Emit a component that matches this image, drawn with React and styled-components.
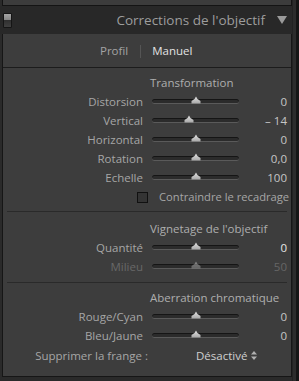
import React from "react";
import styled, { createGlobalStyle } from "styled-components";

const GlobalStyle = createGlobalStyle`
  html, body {
    margin: 0;
    padding: 0;
    background: #1c1c1c;
  }
  body {
    font-family: "Open Sans", "Noto Sans", sans-serif;
    -webkit-font-smoothing: antialiased;
  }
`;

const Screen = styled.div`
  width: 299px;
  height: 381px;
  overflow: hidden;
  background: #2a2a2a;
  display: flex;
`;

const Column = styled.div`
  width: 292px;
  display: flex;
  flex-direction: column;
  padding-left: 2px;
  box-sizing: border-box;
`;

const RightStrip = styled.div`
  width: 3px;
  background: #2c2c2c;
  border-left: 1px solid #222;
  & + div {
    flex: 1;
    background: #151515;
  }
`;

const PrevPanel = styled.div`
  height: 5px;
  background: #3c3c3c;
  border: 1px solid #141414;
  border-top: 0;
`;

const Header = styled.div`
  height: 28px;
  display: flex;
  align-items: center;
  background: #282828;
  margin-left: -2px;
  padding: 0 8px 0 3px;
  margin-right: -3px;
`;

const Toggle = styled.div`
  width: 7px;
  height: 13px;
  border: 1px solid #151515;
  border-radius: 1px;
  background: linear-gradient(#a4a4a4 0, #828282 50%, #303030 50%, #404040 100%);
  margin-top: 1px;
`;

const Title = styled.div`
  flex: 1;
  text-align: right;
  color: #9d9d9d;
  font-size: 13.5px;
  padding-right: 12px;
`;

const Panel = styled.div`
  background: #3d3d3d;
  border: 1px solid #161616;
  border-top: 0;
  height: 343px;
  box-sizing: border-box;
`;

const Tabs = styled.div`
  height: 33px;
  display: flex;
  align-items: center;
  border-bottom: 1px solid #1c1c1c;
  padding-left: 97px;
  font-size: 11.5px;
`;

const Tab = styled.span`
  color: ${(p) => (p.$active ? "#e2e2e2" : "#a3a3a3")};
`;

const TabSep = styled.span`
  width: 1px;
  height: 13px;
  background: #555;
  margin: 2px 11px 0 12px;
`;

const Section = styled.div`
  padding: ${(p) => p.$pad};
  border-bottom: ${(p) => (p.$last ? "0" : "1px solid #2a2a2a")};
  margin: 0 4px;
`;

const Heading = styled.div`
  height: 19px;
  line-height: 19px;
  padding-left: 143px;
  color: #aeaeae;
  font-size: 11.5px;
`;

const Row = styled.div`
  height: 19px;
  display: grid;
  grid-template-columns: 136px 87px 39px;
  column-gap: 9px;
  align-items: center;
  font-size: 11.5px;
  color: ${(p) => (p.$dim ? "#686868" : "#a6a6a6")};
`;

const Label = styled.div`
  text-align: right;
  white-space: nowrap;
`;

const Value = styled.div`
  text-align: right;
  color: ${(p) => (p.$dim ? "#666" : p.$bright ? "#e6e6e6" : "#c6c6c6")};
`;

const Track = styled.div`
  position: relative;
  height: 5px;
  border-radius: 3px;
  background: #2b2b2b;
  border-top: 1px solid #151515;
  border-bottom: 1px solid #5a5a5a;
  box-sizing: border-box;
`;

const Thumb = styled.svg`
  position: absolute;
  top: -4px;
  width: 10px;
  height: 8px;
  margin-left: -5px;
  opacity: ${(p) => (p.$dim ? 0.45 : 1)};
`;

const CheckRow = styled.div`
  height: 19px;
  display: flex;
  align-items: center;
  padding-left: 130px;
  font-size: 11.2px;
  color: #a6a6a6;
  white-space: nowrap;
`;

const Box = styled.span`
  flex: none;
  width: 9px;
  height: 9px;
  border: 1px solid #111;
  background: #343434;
  margin-right: 11px;
  margin-top: 1px;
`;

const SelectRow = styled.div`
  height: 21px;
  display: flex;
  align-items: center;
  font-size: 11.5px;
  color: #a6a6a6;
`;

const SelectLabel = styled.div`
  width: 141px;
  text-align: right;
  white-space: nowrap;
`;

const SelectValue = styled.div`
  margin-left: 48px;
  color: #d0d0d0;
  display: flex;
  align-items: center;
  gap: 4px;
`;

function Slider({ label, value, pos, dim, bright }) {
  return (
    <Row $dim={dim}>
      <Label>{label}</Label>
      <Track>
        <Thumb viewBox="0 0 10 8" $dim={dim} style={{ left: `${pos * 100}%` }}>
          <defs>
            <linearGradient id="tg" x1="0" y1="0" x2="0" y2="1">
              <stop offset="0" stopColor="#e4e4e4" />
              <stop offset="1" stopColor="#a8a8a8" />
            </linearGradient>
          </defs>
          <path d="M5 0.5 L6.5 3 L9.5 5 L9.5 7.5 L0.5 7.5 L0.5 5 L3.5 3 Z" fill="url(#tg)" />
        </Thumb>
      </Track>
      <Value $dim={dim} $bright={bright}>{value}</Value>
    </Row>
  );
}

export default function App() {
  return (
    <Screen>
      <GlobalStyle />
      <Column>
        <PrevPanel />
        <Header>
          <Toggle />
          <Title>Corrections de l'objectif</Title>
          <svg width="10" height="8" viewBox="0 0 10 8">
            <path d="M0 0 H10 L5 8 Z" fill="#9a9a9a" />
          </svg>
        </Header>
        <Panel>
          <Tabs>
            <Tab>Profil</Tab>
            <TabSep />
            <Tab $active>Manuel</Tab>
          </Tabs>
          <Section $pad="5px 0 5px">
            <Heading>Transformation</Heading>
            <Slider label="Distorsion" value="0" pos={0.5} />
            <Slider label="Vertical" value="– 14" pos={0.43} />
            <Slider label="Horizontal" value="0" pos={0.5} />
            <Slider label="Rotation" value="0,0" pos={0.5} />
            <Slider label="Echelle" value="100" pos={0.5} />
            <CheckRow>
              <Box />
              Contraindre le recadrage
            </CheckRow>
          </Section>
          <Section $pad="7px 0 6px">
            <Heading>Vignetage de l'objectif</Heading>
            <Slider label="Quantité" value="0" pos={0.5} bright />
            <Slider label="Milieu" value="50" pos={0.5} dim />
          </Section>
          <Section $pad="5px 0 0" $last>
            <Heading>Aberration chromatique</Heading>
            <Slider label="Rouge/Cyan" value="0" pos={0.5} />
            <Slider label="Bleu/Jaune" value="0" pos={0.5} />
            <SelectRow>
              <SelectLabel>Supprimer la frange :</SelectLabel>
              <SelectValue>
                Désactivé
                <svg width="6" height="9" viewBox="0 0 6 9">
                  <path d="M3 0 L6 3.5 H0 Z M3 9 L0 5.5 H6 Z" fill="#b0b0b0" />
                </svg>
              </SelectValue>
            </SelectRow>
          </Section>
        </Panel>
      </Column>
      <RightStrip />
      <div />
    </Screen>
  );
}
